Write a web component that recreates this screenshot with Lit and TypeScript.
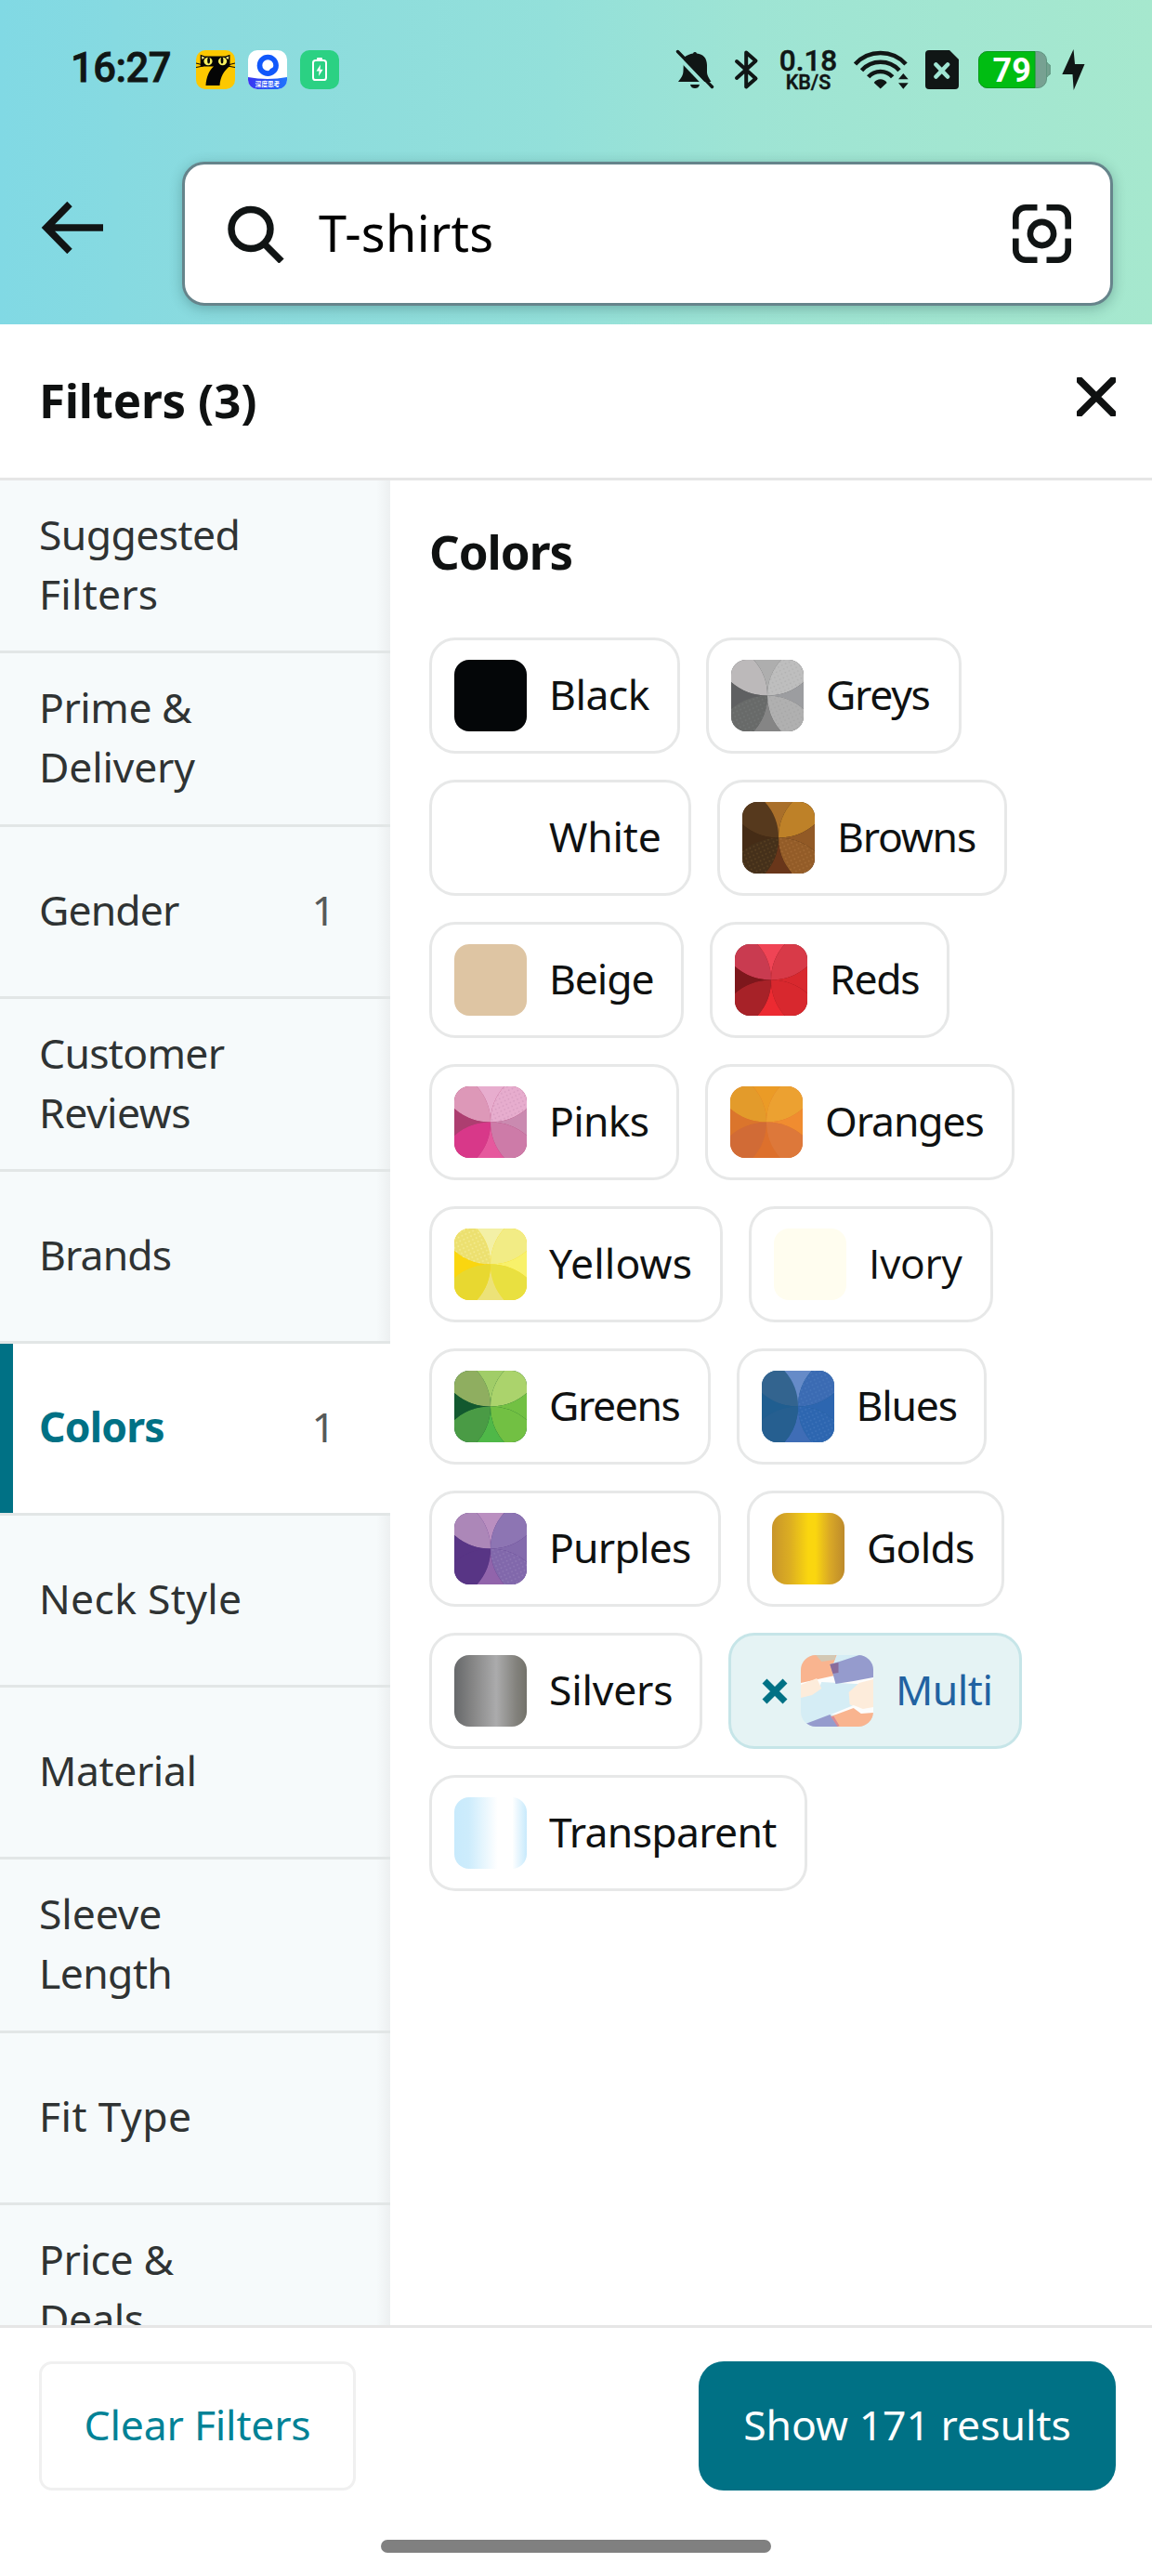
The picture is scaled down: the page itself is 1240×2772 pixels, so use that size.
import { LitElement, html, css, svg, nothing } from "lit";
import { customElement, property } from "lit/decorators.js";
import { classMap } from "lit/directives/class-map.js";
import { styleMap } from "lit/directives/style-map.js";

/** Eight facet colours, clockwise from the top-left corner. */
type Facets = [string, string, string, string, string, string, string, string];

interface Swatch {
  solid?: string;
  facets?: Facets;
  /** Facets that carry a fine dotted texture: index and dot colour. */
  dots?: [number, string][];
  gradient?: [number, string][];
  patchwork?: boolean;
}

interface ColorOption {
  name: string;
  width: number;
  spacing: number;
  swatch: Swatch;
  selected?: boolean;
  plain?: boolean;
}

interface Category {
  /** Each line of the label with its letter spacing. */
  lines: [string, number][];
  height: number;
  count?: number;
  active?: boolean;
}

const CATEGORIES: Category[] = [
  { lines: [["Suggested", -0.6], ["Filters", 0.2]], height: 186 },
  { lines: [["Prime &", -0.5], ["Delivery", -0.2]], height: 187 },
  { lines: [["Gender", -0.9]], height: 185, count: 1 },
  { lines: [["Customer", -0.7], ["Reviews", -0.5]], height: 186 },
  { lines: [["Brands", -0.9]], height: 185 },
  { lines: [["Colors", -0.8]], height: 185, count: 1, active: true },
  { lines: [["Neck Style", 0.3]], height: 185 },
  { lines: [["Material", -0.4]], height: 185 },
  { lines: [["Sleeve", -0.1], ["Length", -0.6]], height: 187 },
  { lines: [["Fit Type", 0.4]], height: 185 },
  { lines: [["Price &", -0.4], ["Deals", -0.6]], height: 187 },
];

const ROWS: ColorOption[][] = [
  [
    { name: "Black", width: 109, spacing: -0.5, swatch: { solid: "#040608" } },
    {
      name: "Greys", width: 114, spacing: -1.3,
      swatch: {
        facets: ["#bcb9ba", "#aeaeae", "#bebebe", "#9c9da0", "#b0b0b0", "#858585", "#686a69", "#5f6062"],
        dots: [[2, "#b2b2b2"], [4, "#a6a6a6"], [6, "#727574"]],
      },
    },
  ],
  [
    { name: "White", width: 121, spacing: -0.2, swatch: { solid: "#ffffff" } },
    {
      name: "Browns", width: 151, spacing: -1.2,
      swatch: {
        facets: ["#56391d", "#a96f2a", "#be8128", "#925a26", "#935c28", "#69361a", "#45301a", "#452c16"],
        dots: [[4, "#a56c35"], [6, "#5c4323"]],
      },
    },
  ],
  [
    { name: "Beige", width: 113, spacing: -1.1, swatch: { solid: "#dec5a3" } },
    {
      name: "Reds", width: 97, spacing: -1.3,
      swatch: { facets: ["#c93b50", "#f04455", "#d83a48", "#d8282e", "#d8282e", "#ec2a31", "#a72228", "#7d171c"] },
    },
  ],
  [
    {
      name: "Pinks", width: 108, spacing: -0.7,
      swatch: {
        facets: ["#dd98b8", "#e7adce", "#e7adce", "#ca8ab0", "#cd7ba8", "#e6589d", "#d83889", "#ad3e70"],
        dots: [[2, "#d69cc0"]],
      },
    },
    {
      name: "Oranges", width: 171.5, spacing: -1.1,
      swatch: { facets: ["#e39b2b", "#eb9b26", "#eca131", "#f08c30", "#dd783a", "#dd702c", "#d16b36", "#db752c"] },
    },
  ],
  [
    {
      name: "Yellows", width: 155, spacing: 0.1,
      swatch: {
        facets: ["#ece070", "#f3f0a6", "#f2ec85", "#f8f16a", "#e9e040", "#ece278", "#e8d830", "#fad60f"],
        dots: [[0, "#f4ec92"]],
      },
    },
    { name: "Ivory", width: 102, spacing: -0.3, plain: true, swatch: { solid: "#fffdef" } },
  ],
  [
    {
      name: "Greens", width: 141.5, spacing: -1.4,
      swatch: { facets: ["#8fae60", "#a1cd68", "#abd36c", "#72c043", "#72c043", "#4fb848", "#4a9b45", "#12592f"] },
    },
    {
      name: "Blues", width: 108.5, spacing: -1.2,
      swatch: {
        facets: ["#33648f", "#668bc8", "#3b6bb3", "#2d66b0", "#2d66b0", "#3f6db6", "#265f90", "#205e90"],
        dots: [[2, "#4777bb"], [4, "#3f74ba"]],
      },
    },
  ],
  [
    {
      name: "Purples", width: 153, spacing: -0.8,
      swatch: {
        facets: ["#ac87b8", "#ba8fc0", "#8d75b3", "#836aac", "#8168ab", "#9164ab", "#583585", "#583585"],
        dots: [[4, "#9079b5"]],
      },
    },
    {
      name: "Golds", width: 116, spacing: -0.8,
      swatch: { gradient: [[0, "#c8952a"], [0.25, "#dcae22"], [0.5, "#fad60f"], [0.6, "#fad60f"], [0.8, "#d9a826"], [1, "#bd8a2c"]] },
    },
  ],
  [
    {
      name: "Silvers", width: 133, spacing: -0.2,
      swatch: { gradient: [[0, "#66686a"], [0.25, "#858585"], [0.58, "#ababac"], [0.85, "#83827d"], [1, "#73726a"]] },
    },
    { name: "Multi", width: 104, spacing: -0.5, selected: true, swatch: { patchwork: true } },
  ],
  [
    {
      name: "Transparent", width: 246, spacing: -0.7,
      swatch: { gradient: [[0, "#c8eafc"], [0.2, "#cdecfc"], [0.6, "#ffffff"], [0.8, "#ffffff"], [1, "#c8eafc"]] },
    },
  ],
];

const CORNER = "M0 0H24A58 58 0 0 1 38.5 38.5A58 58 0 0 1 0 24Z";
const SIDE = "M24 0H53A58 58 0 0 0 38.5 38.5A58 58 0 0 0 24 0Z";

@customElement("color-swatch")
class ColorSwatch extends LitElement {
  @property({ attribute: false }) swatch: Swatch = {};

  static styles = css`
    :host { display: block; width: 78px; height: 77px; border-radius: 16px; overflow: hidden; flex: none; }
    .art { display: block; width: 78px; height: 77px; }
  `;

  private facet(index: number, fill: string) {
    const turn = Math.floor(index / 2) * 90;
    return svg`<path d=${index % 2 ? SIDE : CORNER} fill=${fill} transform="rotate(${turn} 38.5 38.5)"></path>`;
  }

  private content() {
    const { solid, facets, dots, gradient, patchwork } = this.swatch;
    if (facets) {
      return svg`
        <rect width="77" height="77" fill=${facets[7]}></rect>
        ${facets.map((c, i) => this.facet(i, c))}
        ${(dots ?? []).map(([i, color]) => svg`
          <defs>
            <pattern id="dots${i}" width="6" height="6" patternUnits="userSpaceOnUse" patternTransform="rotate(20)">
              <circle cx="1.5" cy="1.5" r="0.9" fill=${color}></circle>
              <circle cx="4.5" cy="4.5" r="0.9" fill=${color}></circle>
            </pattern>
          </defs>
          ${this.facet(i, `url(#dots${i})`)}`)}`;
    }
    if (gradient) {
      return svg`
        <linearGradient id="g">${gradient.map(([o, c]) => svg`<stop offset=${o} stop-color=${c}></stop>`)}</linearGradient>
        <rect width="77" height="77" fill="url(#g)"></rect>`;
    }
    if (patchwork) {
      return svg`
        <rect width="77" height="77" fill="#d5edf5"></rect>
        <path d="M0 26L38 18L77 20V31L58 31L40 30L22 29L20 34L0 33Z" fill="#fdfdfc"></path>
        <path d="M0 0H38L34 11L36 22L0 30Z" fill="#f9b48f"></path>
        <path d="M16 0H37L36 5L22 7Z" fill="#d3c8b4"></path>
        <path d="M31 10L41 7L62 0H77V24L56 28L37 31L34 20Z" fill="#959bcd"></path>
        <path d="M31 10L40 8L40 19L34 20Z" fill="#8a6c9b"></path>
        <path d="M0 32L17 25L22 36L12 43L0 46Z" fill="#fdecdb"></path>
        <path d="M62 30L77 26V62H66L52 53L51 40Z" fill="#fdecdb"></path>
        <path d="M32 64L56 54L66 58L77 56V64L60 66Z" fill="#fdfdfc"></path>
        <path d="M5 74L31 64L41 77H5Z" fill="#959bcd"></path>
        <path d="M32 66L56 57L64 63L77 62V77H40Z" fill="#f9b48f"></path>
        <path d="M32 66L35 66L41 76L39 77Z" fill="#d98a94"></path>`;
    }
    return svg`<rect width="77" height="77" fill=${solid ?? "#fff"}></rect>`;
  }

  render() {
    return html`<svg class="art" viewBox="0 0 77 77" preserveAspectRatio="none">${this.content()}</svg>`;
  }
}

@customElement("color-chip")
class ColorChip extends LitElement {
  @property({ attribute: false }) option!: ColorOption;

  static styles = css`
    :host { display: block; }
    .chip {
      box-sizing: border-box; height: 125px; display: flex; align-items: center;
      border: 3px solid #e7e8e8; border-radius: 28px; padding: 0 29px 0 24px;
      color: #0f1111; background: #fff;
    }
    .selected { background: #e5f3f4; border-color: #c6e5e8; color: #2162a1; padding-left: 33px; }
    .cross { width: 28px; height: 28px; margin-right: 14px; flex: none; }
    .name {
      margin-left: 24px; padding-bottom: 3px; white-space: nowrap;
      font: 400 44.5px/64px "Noto Sans", "Open Sans", sans-serif;
    }
    .plain { font-family: "Open Sans", "Noto Sans", sans-serif; }
  `;

  render() {
    const o = this.option;
    return html`
      <div class=${classMap({ chip: true, selected: !!o.selected })}>
        ${o.selected
          ? html`<svg class="cross" viewBox="0 0 28 28"><path d="M3 3L25 25M25 3L3 25" stroke="#007185" stroke-width="7"></path></svg>`
          : nothing}
        <color-swatch .swatch=${o.swatch}></color-swatch>
        <span class=${classMap({ name: true, plain: !!o.plain })}
          style=${styleMap({ width: `${o.width}px`, letterSpacing: `${o.spacing}px` })}>${o.name}</span>
      </div>`;
  }
}

@customElement("status-bar")
class StatusBar extends LitElement {
  static styles = css`
    :host { display: block; }
    .bar { height: 150px; box-sizing: border-box; padding: 0 72px 0 76px; display: flex; align-items: center; color: #101615; }
    .time {
      font: 500 43.5px/50px Roboto, sans-serif; width: 135px; letter-spacing: -0.5px; padding-bottom: 2px;
      -webkit-text-stroke: 0.8px #101615;
    }
    .apps { display: flex; gap: 14px; }
    .app { display: block; width: 42px; height: 42px; }
    .spacer { flex: 1; }
    .icon { display: block; flex: none; overflow: visible; }
    .bell { width: 44px; height: 44px; margin-right: 19px; }
    .bt { width: 27px; height: 44px; margin-right: 22px; }
    .speed {
      display: flex; flex-direction: column; align-items: center; width: 62px; margin-right: 17px;
      -webkit-text-stroke: 0.5px #101615;
    }
    .rate { font: 500 31.5px/26px Roboto, sans-serif; }
    .unit { font: 500 21.5px/19px Roboto, sans-serif; }
    .wifi { width: 60px; height: 44px; margin-right: 18px; }
    .sim { width: 36px; height: 42px; margin-right: 21px; }
    .battery { width: 78px; height: 40px; margin-right: 12px; }
    .bolt { width: 25px; height: 44px; }
    .pct { font: 700 36px Roboto, sans-serif; fill: #fff; }
    .tag { font: 700 6.6px "Noto Sans CJK SC", sans-serif; fill: #fff; }
  `;

  render() {
    return html`
      <div class="bar">
        <span class="time">16:27</span>
        <div class="apps">
          <svg class="app" viewBox="0 0 42 42">
            <rect width="42" height="42" rx="10" fill="#fdc800"></rect>
            <path d="M4.7 4.7L9.5 6.5H31.5L36.5 4.7V17C30 22 26 29 25.5 38H10.5C11 29 14 22 19 17.5H4.7Z" fill="#050505"></path>
            <path d="M0 14L8 16M0 18.5L8 17M42 14L34 16M42 18.5L34 17" stroke="#050505" stroke-width="1"></path>
            <path d="M6 6.5L9.5 8L6.5 10ZM35.3 6.5L31.8 8L34.8 10Z" fill="#fdf08a"></path>
            <ellipse cx="13" cy="12" rx="4.6" ry="4.2" fill="#f6ee5e"></ellipse>
            <ellipse cx="28.6" cy="12" rx="4.6" ry="4.2" fill="#f6ee5e"></ellipse>
            <ellipse cx="13.6" cy="11" rx="1.4" ry="3.6" fill="#050505"></ellipse>
            <ellipse cx="28" cy="11" rx="1.4" ry="3.6" fill="#050505"></ellipse>
          </svg>
          <svg class="app" viewBox="0 0 42 42">
            <defs>
              <clipPath id="appclip"><rect width="42" height="42" rx="10"></rect></clipPath>
              <linearGradient id="banner"><stop offset="0" stop-color="#3a35f2"></stop><stop offset="1" stop-color="#1f74fb"></stop></linearGradient>
            </defs>
            <g clip-path="url(#appclip)">
              <rect width="42" height="42" fill="#fff"></rect>
              <path d="M0 29Q21 33 42 29V42H0Z" fill="url(#banner)"></path>
              <circle cx="21.3" cy="16.4" r="11.6" fill="#1158fb"></circle>
              <path d="M21.3 10.3A6 6 0 1 0 21.3 22.3C23.3 22.3 23 20.6 24.5 19.8C26 19.2 27.3 19 27.3 16.3A6 6 0 0 0 21.3 10.3Z" fill="#fff"></path>
              <text class="tag" x="21" y="39" text-anchor="middle">深度思考</text>
            </g>
          </svg>
          <svg class="app" viewBox="0 0 42 42">
            <rect width="42" height="42" rx="10" fill="#2bd183"></rect>
            <rect x="14" y="11" width="14" height="21" rx="2.6" fill="none" stroke="#fff" stroke-width="2"></rect>
            <rect x="18" y="8" width="6" height="3" rx="1" fill="#fff"></rect>
            <path d="M22 15.5L17.5 22.5H20.6L20 28L24.6 20.8H21.5Z" fill="#fff"></path>
          </svg>
        </div>
        <div class="spacer"></div>
        <svg class="icon bell" viewBox="0 0 44 44">
          <mask id="cut">
            <rect width="44" height="44" fill="#fff"></rect>
            <path d="M-1 4L39 46" stroke="#000" stroke-width="4"></path>
          </mask>
          <g mask="url(#cut)" fill="#101615">
            <path d="M9 9C12 6 16 5 19 4.4A2.2 2.2 0 0 1 23 4.4C30 5.4 33.8 9 34 17V25C34.2 29 37 32 38.5 35H3C6 31 8.5 28 8.5 23Z"></path>
            <path d="M16 38H26C25.2 41 23.4 42 21 42S16.8 41 16 38Z"></path>
          </g>
          <path d="M2.5 2.5L39.5 40.5" stroke="#101615" stroke-width="3.4" stroke-linecap="round"></path>
        </svg>
        <svg class="icon bt" viewBox="0 0 27 44">
          <path d="M3 13L23.5 31.5L13.2 40.5V3.5L23.5 12.5L3 31" fill="none" stroke="#101615" stroke-width="4" stroke-linecap="round" stroke-linejoin="round"></path>
        </svg>
        <div class="speed"><span class="rate">0.18</span><span class="unit">KB/S</span></div>
        <svg class="icon wifi" viewBox="0 0 60 44">
          <g fill="none" stroke="#101615" stroke-width="4.6">
            <path d="M2.5 16A37 37 0 0 1 57 16"></path>
            <path d="M9.5 22.7A27.5 27.5 0 0 1 50 22.7"></path>
            <path d="M16.7 29.8A17.5 17.5 0 0 1 42.7 29.8"></path>
          </g>
          <path d="M22.7 36C26 31 33.5 31 36.7 36L29.7 42.6ZM49 32.3H59.7L54.3 26ZM49 36.3H59.7L54.3 42.8Z" fill="#101615"></path>
        </svg>
        <svg class="icon sim" viewBox="0 0 36 42">
          <path d="M4 0H26L36 10V38A4 4 0 0 1 32 42H4A4 4 0 0 1 0 38V4A4 4 0 0 1 4 0Z" fill="#101615"></path>
          <path d="M11.5 15.5L24 28.5M24 15.5L11.5 28.5" stroke="#a0e5d3" stroke-width="4.6" stroke-linecap="round"></path>
        </svg>
        <svg class="icon battery" viewBox="0 0 78 40">
          <path d="M73 12.5H74.5Q75 14.5 77.3 15V25Q75 25.5 74.5 27.5H73Z" fill="#74a18f" stroke="#5f9580"></path>
          <rect x=".5" y=".5" width="73" height="39" rx="9.5" fill="#77a192" stroke="#5f9580"></rect>
          <path d="M10 .5H61V39.5H10A9.5 9.5 0 0 1 .5 30V10A9.5 9.5 0 0 1 10 .5Z" fill="#00bd12" stroke="#0a9a1c"></path>
          <text class="pct" x="15.5" y="32.6">79</text>
        </svg>
        <svg class="icon bolt" viewBox="0 0 25 44"><path d="M12.5 0L.3 27H11.5L12.7 44L24.5 16H14Z" fill="#101615"></path></svg>
      </div>`;
  }
}

@customElement("app-root")
class AppRoot extends LitElement {
  static styles = css`
    :host {
      display: flex; flex-direction: column; width: 1240px; height: 2772px; overflow: hidden;
      background: #fff; color: #0f1111; font-family: "Noto Sans", "Open Sans", sans-serif;
    }
    .top { flex: none; height: 349px; background: linear-gradient(90deg, #81d9e4 0%, #8bdbde 20%, #93e0da 48%, #9ee4d4 65%, #a6e8ce 100%); }
    .searchrow { display: flex; align-items: center; padding: 24px 42px 0 44px; }
    .back { display: block; width: 68px; height: 56px; margin: 0 84px 14px 0; }
    .searchbox {
      flex: 1; height: 155px; box-sizing: border-box; display: flex; align-items: center;
      border: 3px solid #66848b; border-radius: 24px; background: #fff; padding: 0 42px 0 46px;
      box-shadow: 0 3px 14px rgba(20, 60, 60, 0.3);
    }
    .magnifier { display: block; width: 62px; height: 62px; margin-right: 36px; }
    .query { flex: 1; font-size: 54px; line-height: 70px; letter-spacing: 0.3px; color: #000; padding-bottom: 3px; }
    .scan { display: block; width: 63px; height: 63px; }
    .titlebar {
      flex: none; height: 168px; box-sizing: border-box; border-bottom: 3px solid #e6e6e6;
      display: flex; align-items: center; justify-content: space-between; padding: 0 39px 0 42px;
    }
    .title { font-size: 51px; line-height: 68px; font-weight: 700; letter-spacing: -0.2px; padding-bottom: 4px; }
    .close { display: block; width: 42px; height: 42px; margin-bottom: 10px; }
    .main { flex: 1; min-height: 0; display: flex; overflow: hidden; }
    .sidebar { flex: none; width: 420px; overflow: hidden; }
    .category {
      box-sizing: border-box; border-bottom: 3px solid #e2e6e6;
      background: linear-gradient(90deg, rgba(237, 240, 241, 0) 405px, #edf0f1 420px), #f6fafb;
      display: flex; align-items: center; justify-content: space-between;
      padding: 0 59px 4px 42px; font-size: 44.5px; line-height: 64px; color: #2f3333;
    }
    .active { background: linear-gradient(90deg, #007185 14px, #fff 14px); }
    .label { display: flex; flex-direction: column; white-space: nowrap; }
    .active .label { color: #007185; font-weight: 700; }
    .count { color: #565959; }
    .options { flex: 1; padding: 42px 0 0 42px; }
    .heading { margin: 0; font-size: 51px; line-height: 68px; font-weight: 700; letter-spacing: -1px; }
    .chips { display: flex; flex-direction: column; gap: 28px; margin-top: 59px; }
    .chiprow { display: flex; gap: 28px; }
    .footer {
      flex: none; height: 270px; box-sizing: border-box; border-top: 3px solid #e6e6e6;
      display: flex; flex-direction: column; align-items: center; justify-content: space-between; padding: 36px 39px 25px 39px;
    }
    .actions { display: flex; justify-content: space-between; align-self: stretch; padding-left: 3px; }
    .button {
      box-sizing: border-box; height: 139px; display: flex; align-items: center; justify-content: center;
      font-size: 44.5px; line-height: 64px; padding-bottom: 4px; white-space: nowrap;
    }
    .clear { width: 341px; border: 3px solid #f0f0f0; border-radius: 14px; color: #008296; letter-spacing: -0.2px; }
    .show { width: 449px; border-radius: 27px; background: #007185; color: #fff; letter-spacing: 0; }
    .home { width: 420px; height: 14px; border-radius: 7px; background: #808080; }
  `;

  render() {
    return html`
      <header class="top">
        <status-bar></status-bar>
        <div class="searchrow">
          <svg class="back" viewBox="0 0 68 56">
            <path d="M67 28H7M31 2.5L6 28L31 53.5" fill="none" stroke="#111414" stroke-width="7.6"></path>
          </svg>
          <div class="searchbox">
            <svg class="magnifier" viewBox="0 0 62 62">
              <circle cx="25" cy="25.5" r="21" fill="none" stroke="#101414" stroke-width="7.4"></circle>
              <path d="M40 42L58 60" stroke="#101414" stroke-width="7.4"></path>
            </svg>
            <span class="query">T-shirts</span>
            <svg class="scan" viewBox="0 0 63 63">
              <g fill="none" stroke="#101414" stroke-width="6.6">
                <path d="M26.5 3.3H14A10.7 10.7 0 0 0 3.3 14V26.5M36.5 3.3H49A10.7 10.7 0 0 1 59.7 14V26.5M26.5 59.7H14A10.7 10.7 0 0 1 3.3 49V36.5M36.5 59.7H49A10.7 10.7 0 0 0 59.7 49V36.5"></path>
                <circle cx="31.5" cy="31.5" r="12.6"></circle>
              </g>
            </svg>
          </div>
        </div>
      </header>
      <div class="titlebar">
        <span class="title">Filters (3)</span>
        <svg class="close" viewBox="0 0 42 42">
          <path d="M3 3L39 39M39 3L3 39" stroke="#0f1111" stroke-width="7.6" stroke-linecap="round"></path>
        </svg>
      </div>
      <div class="main">
        <nav class="sidebar">
          ${CATEGORIES.map((c) => html`
            <div class=${classMap({ category: true, active: !!c.active })} style=${styleMap({ height: `${c.height}px` })}>
              <span class="label">
                ${c.lines.map(([text, spacing]) => html`<span style=${styleMap({ letterSpacing: `${spacing}px` })}>${text}</span>`)}
              </span>
              ${c.count ? html`<span class="count">${c.count}</span>` : nothing}
            </div>`)}
        </nav>
        <section class="options">
          <h2 class="heading">Colors</h2>
          <div class="chips">
            ${ROWS.map((row) => html`
              <div class="chiprow">${row.map((o) => html`<color-chip .option=${o}></color-chip>`)}</div>`)}
          </div>
        </section>
      </div>
      <footer class="footer">
        <div class="actions">
          <div class="button clear">Clear Filters</div>
          <div class="button show">Show 171 results</div>
        </div>
        <div class="home"></div>
      </footer>`;
  }
}
